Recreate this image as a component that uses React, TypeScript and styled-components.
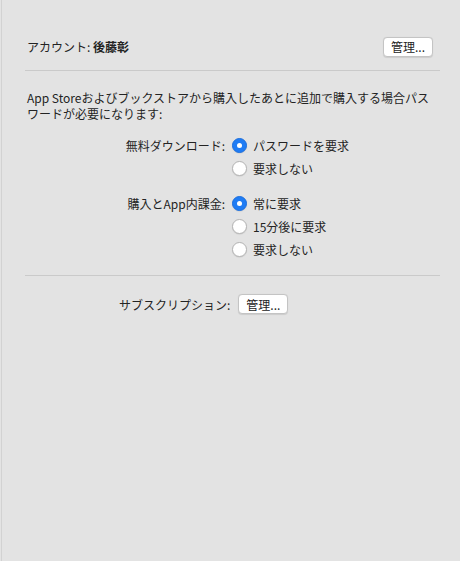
import styled, { createGlobalStyle } from "styled-components";

const GlobalStyle = createGlobalStyle`
  html, body {
    margin: 0;
    padding: 0;
    background: #e3e3e3;
  }
  body {
    font-family: "Noto Sans CJK JP", "Noto Sans", "Liberation Sans", sans-serif;
    font-size: 12px;
    color: #232323;
  }
`;

const downloadOptions = [
  { text: "パスワードを要求", checked: true },
  { text: "要求しない", checked: false },
];

const purchaseOptions = [
  { text: "常に要求", checked: true },
  { text: "15分後に要求", checked: false },
  { text: "要求しない", checked: false },
];

const Window = styled.div`
  height: 561px;
  box-sizing: border-box;
  border-left: 1px solid #d2d2d2;
  margin-left: 1px;
  padding: 36px 20px 0 23px;
`;

const AccountRow = styled.div`
  height: 21px;
  display: flex;
  align-items: center;
  justify-content: space-between;
  padding: 0 7px 0 2px;
`;

const AccountName = styled.b`
  font-weight: 700;
`;

const Divider = styled.hr<{ $top: number }>`
  border: none;
  border-top: 1px solid #cacaca;
  margin: ${(p) => p.$top}px 0 0;
`;

const Notice = styled.p`
  margin: 19px 0 0;
  padding-left: 2px;
  line-height: 16px;
`;

const Form = styled.div`
  display: grid;
  grid-template-columns: 200px auto;
  column-gap: 7px;
  row-gap: 12px;
  margin-top: 12px;
`;

const Label = styled.div`
  height: 23px;
  line-height: 23px;
  text-align: right;
`;

const Options = styled.div`
  display: flex;
  flex-direction: column;
`;

const Option = styled.label`
  height: 23px;
  display: flex;
  align-items: center;
  gap: 6px;
`;

const Radio = styled.span<{ $checked: boolean }>`
  width: 15px;
  height: 15px;
  box-sizing: border-box;
  border-radius: 50%;
  display: flex;
  align-items: center;
  justify-content: center;
  background: ${(p) => (p.$checked ? "#1f7cf4" : "#ffffff")};
  border: 1px solid ${(p) => (p.$checked ? "#1a6fe0" : "#b4b4b4")};
  box-shadow: 0 0.5px 1px rgba(0, 0, 0, 0.12);
  &::after {
    content: "";
    display: ${(p) => (p.$checked ? "block" : "none")};
    width: 5px;
    height: 5px;
    border-radius: 50%;
    background: #ffffff;
  }
`;

const SubscriptionRow = styled.div`
  display: flex;
  align-items: center;
  gap: 8px;
  margin-top: 18px;
  padding-left: 94px;
`;

const Button = styled.button`
  height: 20px;
  width: 50px;
  padding: 0;
  font: inherit;
  color: #232323;
  background: #ffffff;
  border: 1px solid #c4c4c4;
  border-radius: 4px;
  box-shadow: 0 0.5px 1px rgba(0, 0, 0, 0.1);
`;

export default function App() {
  return (
    <>
      <GlobalStyle />
      <Window>
        <AccountRow>
          <span>
            アカウント: <AccountName>後藤彰</AccountName>
          </span>
          <Button>管理...</Button>
        </AccountRow>
        <Divider $top={13} />
        <Notice>
          App Storeおよびブックストアから購入したあとに追加で購入する場合パスワードが必要になります:
        </Notice>
        <Form>
          <Label>無料ダウンロード:</Label>
          <Options>
            {downloadOptions.map((o) => (
              <Option key={o.text}>
                <Radio $checked={o.checked} />
                {o.text}
              </Option>
            ))}
          </Options>
          <Label>購入とApp内課金:</Label>
          <Options>
            {purchaseOptions.map((o) => (
              <Option key={o.text}>
                <Radio $checked={o.checked} />
                {o.text}
              </Option>
            ))}
          </Options>
        </Form>
        <Divider $top={14} />
        <SubscriptionRow>
          <span>サブスクリプション:</span>
          <Button>管理...</Button>
        </SubscriptionRow>
      </Window>
    </>
  );
}
